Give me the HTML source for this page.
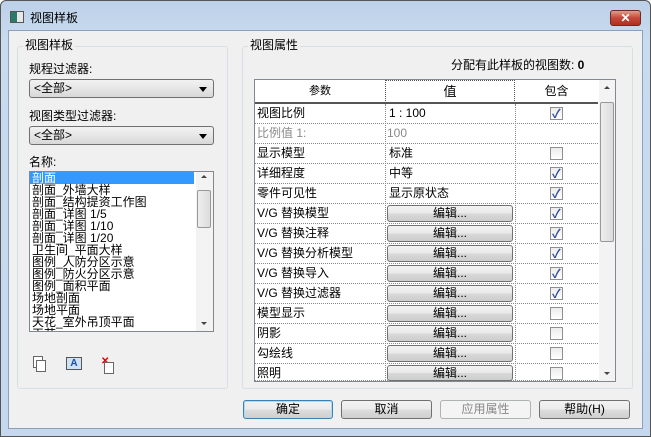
<!DOCTYPE html>
<html><head><meta charset="utf-8"><style>
*{box-sizing:border-box;margin:0;padding:0}
body{width:651px;height:437px;overflow:hidden;font-family:"Liberation Sans","Noto Sans CJK SC",sans-serif;font-size:12px;color:#000;background:#fff;position:relative}
.abs{position:absolute}
.frame{left:0;top:0;width:651px;height:437px;background:linear-gradient(#bcd0e8,#c9dbef 40px,#c5d8ee);border:1px solid #555;border-radius:6px 6px 0 0}
.client{left:8px;top:30px;width:635px;height:399px;background:#f0f0f0;border:1px solid #8aa0bb}
.grp{border:1px solid #d5dfe5;border-radius:3px}
.lbl{background:#f0f0f0;padding:0 2px;line-height:14px}
.combo{height:19px;border:1px solid #707070;border-radius:3px;background:linear-gradient(#f2f2f2,#e6e6e6 50%,#d8d8d8);padding-left:4px;line-height:17px}
.combo:after{content:"";position:absolute;right:6px;top:7px;border:4px solid transparent;border-top:5px solid #000;border-bottom:0}
.list{background:#fff;border:1px solid #828790}
.list div{height:12px;line-height:12px;padding-left:2px;white-space:nowrap;font-size:12px}
.sb{background:#f3f3f3}
.btn{height:19px;border:1px solid #707070;border-radius:3px;background:linear-gradient(#f2f2f2,#ebebeb 50%,#dddddd 51%,#cfcfcf);text-align:center;line-height:17px}
table{border-collapse:collapse}
.cell{position:absolute;border-bottom:1px dotted #888;height:20px;line-height:19px;padding-left:2px;white-space:nowrap}
.cb{position:absolute;width:13px;height:13px;border:1px solid #8f8f8f;background:linear-gradient(#ececec,#fff)}
.cb.on:after{content:"✓";position:absolute;left:1px;top:-3px;font-size:12px;color:#2c4a9a;font-weight:bold}
.eb{position:absolute;left:387px;width:126px;height:17px;border:1px solid #707070;border-radius:3px;background:linear-gradient(#f4f4f4,#e8e8e8 50%,#d9d9d9 51%,#cdcdcd);text-align:center;line-height:15px}
</style></head><body>
<div class="abs frame"></div>
<div class="abs" style="left:10px;top:11px;width:14px;height:12px;border:1px solid #555;background:linear-gradient(90deg,#2a7a6a 50%,#e8e8e8 50%)"></div>
<div class="abs" style="left:30px;top:9px;font-size:12px;line-height:18px">视图样板</div>
<div class="abs" style="left:610px;top:10px;width:31px;height:16px;border:1px solid #6b2a22;border-radius:3px;background:linear-gradient(#e89a8a,#c4483a 50%,#b0301f);color:#fff;text-align:center;font-weight:bold;line-height:14px;font-size:12px">✕</div>
<div class="abs client"></div>

<div class="abs grp" style="left:17px;top:46px;width:211px;height:343px"></div>
<div class="abs lbl" style="left:23px;top:38px">视图样板</div>
<div class="abs" style="left:29px;top:62px;line-height:14px">规程过滤器:</div>
<div class="abs combo" style="left:29px;top:79px;width:185px">&lt;全部&gt;</div>
<div class="abs" style="left:29px;top:109px;line-height:14px">视图类型过滤器:</div>
<div class="abs combo" style="left:29px;top:126px;width:185px">&lt;全部&gt;</div>
<div class="abs" style="left:29px;top:155px;line-height:14px">名称:</div>
<div class="abs list" style="left:29px;top:171px;width:185px;height:161px;overflow:hidden">
<div style="background:#3399ff;color:#fff;width:164px">剖面</div>
<div>剖面_外墙大样</div><div>剖面_结构提资工作图</div><div>剖面_详图 1/5</div><div>剖面_详图 1/10</div><div>剖面_详图 1/20</div><div>卫生间_平面大样</div><div>图例_人防分区示意</div><div>图例_防火分区示意</div><div>图例_面积平面</div><div>场地剖面</div><div>场地平面</div><div>天花_室外吊顶平面</div><div>天花</div>
</div>
<div class="abs sb" style="left:196px;top:172px;width:17px;height:159px"></div>
<div class="abs" style="left:197px;top:190px;width:14px;height:38px;border:1px solid #999;border-radius:2px;background:linear-gradient(90deg,#eee,#dcdcdc)"></div>
<div class="abs" style="left:201px;top:175px;border:3px solid transparent;border-bottom:3px solid #444;border-top:0"></div>
<div class="abs" style="left:201px;top:322px;border:3px solid transparent;border-top:3px solid #444;border-bottom:0"></div>
<!-- icons -->
<div class="abs" style="left:33px;top:356px;width:10px;height:12px;border:1px solid #666;background:#fff"></div>
<div class="abs" style="left:36px;top:360px;width:10px;height:12px;border:1px solid #666;background:#fff"></div>
<div class="abs" style="left:66px;top:357px;width:16px;height:13px;border:1px solid #555;background:#cfe3f7;color:#1a4fa0;font-size:10px;font-weight:bold;line-height:11px;text-align:center">A</div>
<div class="abs" style="left:101px;top:357px;color:#d00;font-size:10px;font-weight:bold;line-height:10px">✕</div>
<div class="abs" style="left:104px;top:362px;width:10px;height:12px;border:1px solid #666;background:#fff"></div>

<div class="abs grp" style="left:242px;top:46px;width:391px;height:343px"></div>
<div class="abs lbl" style="left:248px;top:38px">视图属性</div>
<div class="abs" style="left:451px;top:58px;line-height:14px">分配有此样板的视图数: <b>0</b></div>
<div class="abs" style="left:254px;top:79px;width:362px;height:303px;border:1px solid #828790;background:#fff;overflow:hidden">
<div class="abs" style="left:0;top:0;width:343px;height:24px;border-bottom:2px solid #555"></div>
<div class="abs" style="left:0;top:0;width:130px;height:23px;line-height:23px;text-align:center;font-size:11px">参数</div>
<div class="abs" style="left:130px;top:0;width:130px;height:23px;line-height:22px;text-align:center;border:1px dotted #555;font-size:13px">值</div>
<div class="abs" style="left:260px;top:0;width:83px;height:23px;line-height:23px;text-align:center">包含</div>
<div class="abs" style="left:130px;top:24px;height:280px;border-left:1px dotted #888"></div>
<div class="abs" style="left:260px;top:24px;height:280px;border-left:1px dotted #888"></div>
<div class="abs sb" style="left:344px;top:0;width:17px;height:301px"></div>
<div class="abs" style="left:345px;top:22px;width:14px;height:140px;border:1px solid #999;border-radius:2px;background:linear-gradient(90deg,#eee,#dcdcdc)"></div>
<div class="abs" style="left:349px;top:6px;border:3px solid transparent;border-bottom:3px solid #444;border-top:0"></div>
<div class="abs" style="left:349px;top:292px;border:3px solid transparent;border-top:3px solid #444;border-bottom:0"></div>
</div>
<div id="rows"></div>
<script>
var rows=[["视图比例","1 : 100",1],["比例值 1:","100",-1],["显示模型","标准",0],["详细程度","中等",1],["零件可见性","显示原状态",1],["V/G 替换模型","E",1],["V/G 替换注释","E",1],["V/G 替换分析模型","E",1],["V/G 替换导入","E",1],["V/G 替换过滤器","E",1],["模型显示","E",0],["阴影","E",0],["勾绘线","E",0],["照明","E",0]];
var h="";rows.forEach(function(r,i){var y=104+i*20;if(y>380)return;var clip=y+20>381?"height:"+(381-y)+"px;overflow:hidden;":"";
var g=r[2]<0?"color:#8a8a8a;":"";
h+='<div class="cell" style="left:255px;top:'+y+'px;width:343px;'+clip+g+'">'+r[0]+'</div>';
if(r[1]=="E")h+='<div class="eb" style="top:'+(y+1)+'px;'+(clip?"height:"+(380-y)+"px;overflow:hidden;":"")+'">编辑...</div>';
else h+='<div class="abs" style="left:'+(r[2]<0?387:389)+'px;top:'+y+'px;line-height:19px;'+g+'">'+r[1]+'</div>';
if(r[2]>=0&&y+16<381)h+='<div class="cb'+(r[2]?' on':'')+'" style="left:550px;top:'+(y+3)+'px"></div>';});
document.getElementById("rows").innerHTML=h;
</script>
<div class="abs btn" style="left:243px;top:400px;width:90px;border-color:#3c7fb1;box-shadow:inset 0 0 0 1px #a8dcf8">确定</div>
<div class="abs btn" style="left:341px;top:400px;width:91px">取消</div>
<div class="abs btn" style="left:440px;top:400px;width:91px;color:#888;border-color:#adb2b5;background:#f4f4f4">应用属性</div>
<div class="abs btn" style="left:539px;top:400px;width:91px">帮助(H)</div>
</body></html>
